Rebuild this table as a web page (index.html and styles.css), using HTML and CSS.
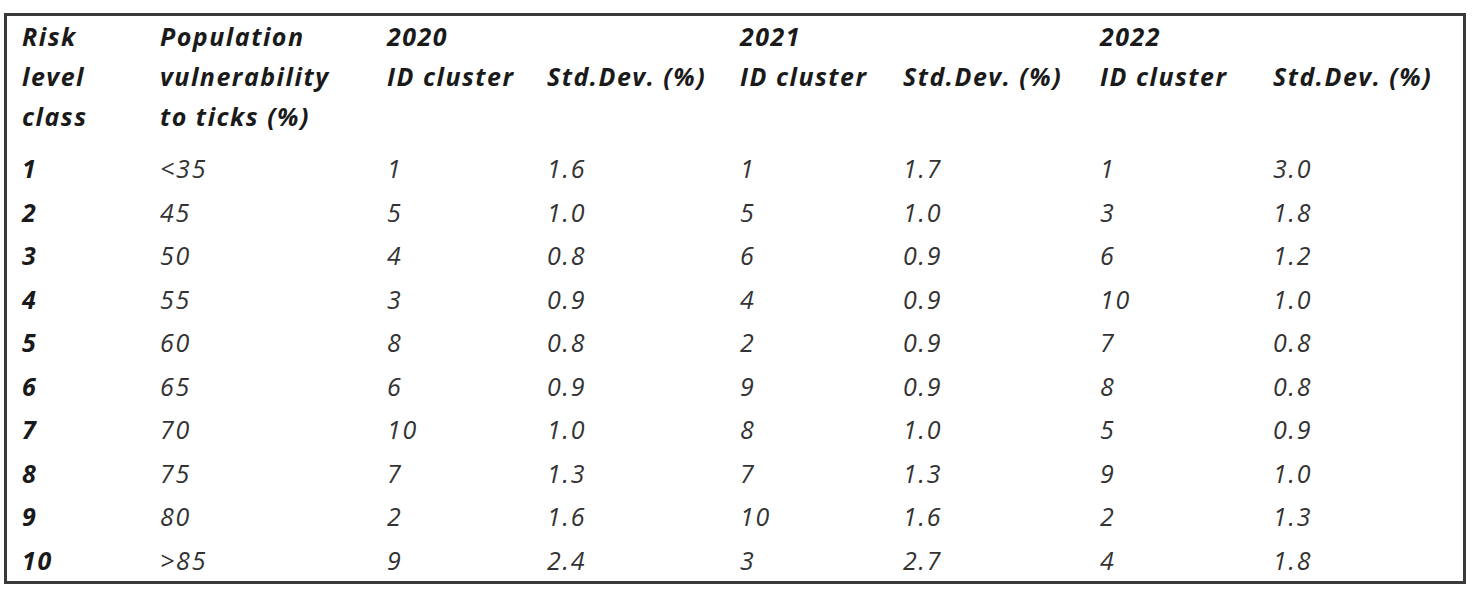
FILE: index.html
```html
<!DOCTYPE html>
<html lang="en">
<head>
<meta charset="utf-8">
<title>Risk level classes</title>
<link rel="stylesheet" href="styles.css">
</head>
<body>
<div class="frame">
  <div class="grid">
    <div class="h">Risk</div><div class="h">Population</div><div class="h">2020</div><div class="h"></div><div class="h">2021</div><div class="h"></div><div class="h">2022</div><div class="h"></div>
    <div class="h">level</div><div class="h">vulnerability</div><div class="h">ID cluster</div><div class="h">Std.Dev. (%)</div><div class="h">ID cluster</div><div class="h">Std.Dev. (%)</div><div class="h">ID cluster</div><div class="h">Std.Dev. (%)</div>
    <div class="h last">class</div><div class="h last">to ticks (%)</div><div class="h last"></div><div class="h last"></div><div class="h last"></div><div class="h last"></div><div class="h last"></div><div class="h last"></div>

    <div class="k">1</div><div class="d">&lt;35</div><div class="d">1</div><div class="d">1.6</div><div class="d">1</div><div class="d">1.7</div><div class="d">1</div><div class="d">3.0</div>
    <div class="k">2</div><div class="d">45</div><div class="d">5</div><div class="d">1.0</div><div class="d">5</div><div class="d">1.0</div><div class="d">3</div><div class="d">1.8</div>
    <div class="k">3</div><div class="d">50</div><div class="d">4</div><div class="d">0.8</div><div class="d">6</div><div class="d">0.9</div><div class="d">6</div><div class="d">1.2</div>
    <div class="k">4</div><div class="d">55</div><div class="d">3</div><div class="d">0.9</div><div class="d">4</div><div class="d">0.9</div><div class="d">10</div><div class="d">1.0</div>
    <div class="k">5</div><div class="d">60</div><div class="d">8</div><div class="d">0.8</div><div class="d">2</div><div class="d">0.9</div><div class="d">7</div><div class="d">0.8</div>
    <div class="k">6</div><div class="d">65</div><div class="d">6</div><div class="d">0.9</div><div class="d">9</div><div class="d">0.9</div><div class="d">8</div><div class="d">0.8</div>
    <div class="k">7</div><div class="d">70</div><div class="d">10</div><div class="d">1.0</div><div class="d">8</div><div class="d">1.0</div><div class="d">5</div><div class="d">0.9</div>
    <div class="k">8</div><div class="d">75</div><div class="d">7</div><div class="d">1.3</div><div class="d">7</div><div class="d">1.3</div><div class="d">9</div><div class="d">1.0</div>
    <div class="k">9</div><div class="d">80</div><div class="d">2</div><div class="d">1.6</div><div class="d">10</div><div class="d">1.6</div><div class="d">2</div><div class="d">1.3</div>
    <div class="k">10</div><div class="d">&gt;85</div><div class="d">9</div><div class="d">2.4</div><div class="d">3</div><div class="d">2.7</div><div class="d">4</div><div class="d">1.8</div>
  </div>
</div>
</body>
</html>
```

FILE: styles.css
```css
html, body {
  margin: 0;
  padding: 0;
  background: #ffffff;
}

body {
  font-family: "Open Sans", Lato, "Liberation Sans", sans-serif;
  font-style: italic;
}

.frame {
  margin: 13px 0 0 4px;
  width: 1462px;
  height: 571px;
  box-sizing: border-box;
  border: 3px solid #3a3a3a;
  padding: 0 0 0 15px;
}

.grid {
  display: grid;
  grid-template-columns: 138px 227px 160px 193px 163px 197px 173px 1fr;
}

.h {
  font-weight: 700;
  font-size: 25px;
  letter-spacing: 1.5px;
  line-height: 40px;
  height: 40px;
  color: #1a1a1a;
  white-space: nowrap;
}

.h.last {
  margin-bottom: 11px;
}

.k, .d {
  font-size: 25px;
  letter-spacing: 1.8px;
  line-height: 43.5px;
  height: 43.5px;
  white-space: nowrap;
}

.k {
  font-weight: 700;
  color: #1a1a1a;
}

.d {
  font-weight: 400;
  color: #333333;
}
```
